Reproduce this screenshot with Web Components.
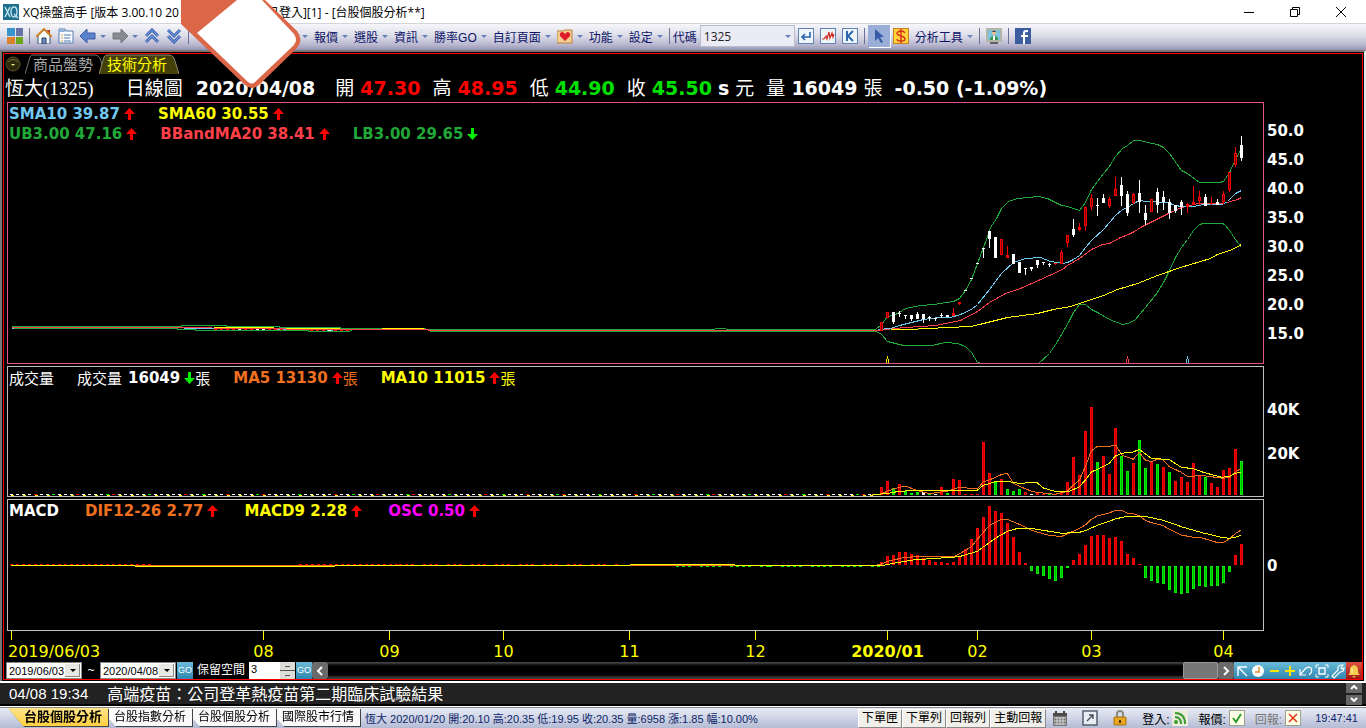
<!DOCTYPE html>
<html lang="zh-Hant">
<head>
<meta charset="utf-8">
<title>XQ操盤高手</title>
<style>
html, body { margin: 0; background: #fff; }
body { font: 12px "Liberation Sans", "Noto Sans CJK TC", sans-serif; color: #000; }
</style>
</head>
<body>
<xq-app></xq-app>

<script>
const ICONS = {
  logo: '<rect width="16" height="16" fill="#1f6f8f"/><path d="M2 3l5 10M7 3L2 13" stroke="#bfe3ee" stroke-width="1.4"/><path d="M11 3q3 0 3 5t-3 5-3-5 3-5zM11 10l4 4" fill="none" stroke="#bfe3ee" stroke-width="1.4"/>',
  tiles: '<path d="M0 0h8v8H0z" fill="#3a94cc"/><path d="M9 0h7v8H9z" fill="#6574a4"/><path d="M0 9h8v7H0z" fill="#d9822b"/><path d="M9 9h7v7H9z" fill="#6aa51e"/>',
  home: '<path d="M11 2h3v5l-3-3z" fill="#b04020"/><path d="M2 8l6-6 6 6v8H2z" fill="#f8f8f4" stroke="#33507c"/><path d="M0 9l8-8 8 8" fill="none" stroke="#d08a30" stroke-width="2"/><path d="M6 10h4v6H6z" fill="#6d86c0" stroke="#26406c"/>',
  doc: '<path d="M1 1h6l1 2h7v12H1z" fill="#f8fbff" stroke="#557cae"/><path d="M1 2h6v2H1z" fill="#8cb0dc"/><path d="M3 7h2M3 10h2M3 13h2" stroke="#d49a30"/><path d="M6 7h7M6 10h6M6 13h7" stroke="#4a7ab8"/>',
  back: '<path d="M0 8l7-7v4h8v6H7v4z" fill="#5b82cc" stroke="#3c5da6"/>',
  forward: '<path d="M16 8L9 1v4H1v6h8v4z" fill="#888c90" stroke="#74787c"/>',
  up: '<path d="M2 8l6-6 6 6M2 14l6-6 6 6" fill="none" stroke="#3e66b4" stroke-width="3"/><path d="M2 8l6-6 6 6M2 14l6-6 6 6" fill="none" stroke="#7ea2e0"/>',
  down: '<path d="M2 2l6 6 6-6M2 8l6 6 6-6" fill="none" stroke="#3e66b4" stroke-width="3"/><path d="M2 2l6 6 6-6M2 8l6 6 6-6" fill="none" stroke="#7ea2e0"/>',
  heart: '<path d="M0 3h6l2-1h7v13H0z" fill="#f3cf94" stroke="#c0803c"/><path d="M8 13L3 8q-1-4 3-4l2 2 2-2q4 0 3 4z" fill="#dc1c28"/>',
  enter: '<rect x=".5" y=".5" width="15" height="15" fill="#eef6fc" stroke="#5e82b4"/><path d="M12 4v5H4M7 6L4 9l3 3" fill="none" stroke="#2862b0" stroke-width="1.6"/>',
  trend: '<rect x=".5" y=".5" width="15" height="15" fill="#eef6fc" stroke="#5e82b4"/><path d="M2 11h2l2-3 1 3 2-7 1 6 2-5 1 4 1-3" fill="none" stroke="#d02820" stroke-width="1.2"/>',
  kline: '<rect x=".5" y=".5" width="15" height="15" fill="#eef6fc" stroke="#5e82b4"/><path d="M5 3v10M11 3L6 8l5 5" fill="none" stroke="#2c68b0" stroke-width="2"/>',
  cursor: '<path d="M4 1l9 8H9l3 5-2 1-3-5-3 3z" fill="#365ca8"/>',
  dollar: '<rect x=".5" y=".5" width="15" height="15" fill="#ffd43a" stroke="#cc8020"/><path d="M12 5Q11 3 8 3T4 5q0 2 4 3t4 3q0 2-4 2t-4-2M8 1v14" fill="none" stroke="#d83018" stroke-width="1.4"/>',
  agent: '<path d="M1 1h14v12H1z" fill="#7cc4dc" stroke="#b4b4a8" stroke-width="2"/><path d="M4 12q0-4 4-4t4 4z" fill="#3a9048"/><path d="M7 8h2v4H7z" fill="#fff"/><circle cx="8" cy="5" r="2" fill="#eac090"/><path d="M6 4q2-3 4 0z" fill="#503020"/><path d="M4 15h8" stroke="#606060" stroke-width="2"/>',
  facebook: '<rect width="16" height="16" fill="#3d5c9f"/><path d="M8 16V9H6V7h2V5q0-3 3-3h2v2h-1q-2 0-2 1v2h3v2h-3v7z" fill="#fff"/>',
  orb: '<circle cx="8" cy="8" r="7" fill="#2c2a0c" stroke="#57532a"/><path d="M3 6q5-5 10 0" stroke="#777340" fill="none"/><path d="M6 8h4l-2 2z" fill="#e8e480"/>',
  left: '<path d="M10 4L6 8l4 4" fill="none" stroke="#fff" stroke-width="2"/>',
  right: '<path d="M6 4l4 4-4 4" fill="none" stroke="#fff" stroke-width="2"/>',
  nw: '<path d="M4 13V4h9M4 4l9 9" fill="none" stroke="#fff" stroke-width="1.4"/>',
  clock: '<circle cx="8" cy="8" r="6" fill="#fff"/><path d="M9 4v5H5" fill="none" stroke="#e09030" stroke-width="1.5"/>',
  minus: '<path d="M4 8h9" stroke="#ffe600" stroke-width="2"/>',
  plus: '<path d="M3 8h10M8 3v10" stroke="#ffe600" stroke-width="2"/>',
  undo: '<path d="M2 6v6h6M2 12l5-6q3-3 6-1 2 4-2 7" fill="none" stroke="#fff" stroke-width="1.2"/>',
  fit: '<path d="M2 5V2h3M11 2h3v3M14 11v3h-3M5 14H2v-3" fill="none" stroke="#fff"/><path d="M5 5h6v6H5z" fill="none" stroke="#fff" stroke-width="1.4"/>',
  wrench: '<path d="M2 13l6-6q-1-4 3-5l2 0-2 3 1 1 2-1q0 4-4 4l-6 6z" fill="none" stroke="#fff" stroke-width="1.2"/>',
  bell: '<path d="M2 12q2-1 2-5t4-5q4 1 4 5t2 5z" fill="#f4cc50"/><path d="M6 13h4l-2 2z" fill="#e8b038"/><path d="M6 5v5" stroke="#fff3b8"/>',
  calendar: '<path d="M1 3h14v13H1z" fill="#777"/><path d="M1 3h14v3H1z" fill="#4c4c4c"/><path d="M2 8h12M2 11h12M2 14h12M5 7v8M8 7v8M11 7v8" stroke="#d4d4d4"/><path d="M4 1v3M12 1v3" stroke="#444" stroke-width="2"/>',
  open: '<rect x="1" y="1" width="14" height="14" fill="#e8ecf4" stroke="#54606c" stroke-width="1.5"/><path d="M5 11l6-6M7 5h4v4" fill="none" stroke="#45505c" stroke-width="1.4"/>',
  lock: '<path d="M5 8V4q0-3 3-3t3 3v4" fill="none" stroke="#8a8a80" stroke-width="2"/><rect x="2" y="7" width="12" height="8" rx="1" fill="#eaa61e" stroke="#a87010"/><path d="M8 10v3" stroke="#553000" stroke-width="2"/>',
  feed: '<rect width="16" height="16" fill="#ecebdc"/><circle cx="4" cy="12" r="2" fill="#3c9c30"/><path d="M3 7q6 0 6 7M3 3q10 0 10 11" fill="none" stroke="#3c9c30" stroke-width="2"/>',
  ok: '<rect x=".5" y=".5" width="15" height="15" fill="#ffffe8" stroke="#a0a090"/><path d="M4 8l3 4 5-8" fill="none" stroke="#2c9a2c" stroke-width="2"/>',
  no: '<rect x=".5" y=".5" width="15" height="15" fill="#ffffe8" stroke="#a0a090"/><path d="M4 4l8 8M12 4l-8 8" fill="none" stroke="#e03818" stroke-width="1.6"/>',
  min: '<path d="M3 8.5h10" stroke="#000"/>',
  restore: '<path d="M3.500 5.500h7v7h-7zM5.500 5V3.500h7v7H11" fill="none" stroke="#000"/>',
  close: '<path d="M3 3l10 10M13 3L3 13" stroke="#000"/>'
};

function define(name, html) {
  const template = document.createElement('template');
  template.innerHTML = html;
  customElements.define(name, class extends HTMLElement {
    constructor() {
      super();
      this.attachShadow({ mode: 'open' }).appendChild(template.content.cloneNode(true));
    }
  });
}

class XqIcon extends HTMLElement {
  constructor() {
    super();
    this.attachShadow({ mode: 'open' });
  }

  connectedCallback() {
    this.shadowRoot.innerHTML = `
      <style>:host { display: block; flex: none; width: 16px; height: 16px; } svg { display: block; }</style>
      <svg width="16" height="16" viewBox="0 0 16 16" aria-hidden="true">${ICONS[this.getAttribute('name')] || ''}</svg>`;
  }
}
customElements.define('xq-icon', XqIcon);

define('xq-titlebar', `
<style>
:host { display: flex; align-items: center; height: 23px; padding: 0 2px 0 3px; background: #fff;
  font: 12px "Open Sans", "Noto Sans CJK TC", sans-serif; white-space: nowrap; }
.name { margin-left: 4px; }
.state { margin-left: 88px; flex: 1; }
button { display: flex; justify-content: center; align-items: center; width: 46px; height: 22px; padding: 0; border: 0; background: none; }
</style>
<xq-icon name="logo"></xq-icon>
<span class="name">XQ操盤高手 [版本 3.00.10 20</span>
<span class="state">已登入][1] - [台股個股分析**]</span>
<button aria-label="最小化"><xq-icon name="min"></xq-icon></button>
<button aria-label="還原"><xq-icon name="restore"></xq-icon></button>
<button aria-label="關閉"><xq-icon name="close"></xq-icon></button>
`);

define('tool-button', `
<style>
:host { display: block; flex: none; }
button { display: flex; align-items: center; height: 22px; padding: 0 3px; border: 0; background: none; font: inherit; color: #0c1468; }
:host([active]) button { background: #9aaed8; box-shadow: 1px 1px #fff; }
i { border: 3px solid transparent; border-top-color: #6482b8; border-bottom: 0; margin-left: 4px; }
:host(:not([menu])) i { display: none; }
</style>
<button><slot></slot><i></i></button>
`);

define('xq-toolbar', `
<style>
:host { display: flex; align-items: center; height: 24px; padding: 0 4px 2px; border-top: 1px solid #d4d4dc;
  background: linear-gradient(#f6f6fa, #dddde9 45%, #b9b7cf 80%, #9794b2); }
hr { width: 1px; height: 16px; margin: 0 3px; border: 0; background: #6c7096; }
.gap { width: 103px; }
label { margin: 0 3px 0 0; color: #0c1468; }
.code { display: grid; width: 95px; }
.code > * { grid-area: 1 / 1; }
select { appearance: none; height: 22px; padding: 0 3px; border: 1px solid #b8bccc; border-radius: 0; background: #eaebf4; font: 12px "Open Sans", sans-serif; color: #222; }
.code i { place-self: center end; margin-right: 4px; border: 3px solid transparent; border-top-color: #6482b8; border-bottom: 0; pointer-events: none; }
</style>
<tool-button><xq-icon name="tiles"></xq-icon></tool-button>
<hr>
<tool-button><xq-icon name="home"></xq-icon></tool-button>
<tool-button><xq-icon name="doc"></xq-icon></tool-button>
<tool-button menu><xq-icon name="back"></xq-icon></tool-button>
<tool-button menu><xq-icon name="forward"></xq-icon></tool-button>
<tool-button><xq-icon name="up"></xq-icon></tool-button>
<tool-button><xq-icon name="down"></xq-icon></tool-button>
<hr>
<span class="gap"></span>
<tool-button menu></tool-button>
<tool-button menu>報價</tool-button>
<tool-button menu>選股</tool-button>
<tool-button menu>資訊</tool-button>
<tool-button menu>勝率GO</tool-button>
<tool-button menu>自訂頁面</tool-button>
<tool-button menu><xq-icon name="heart"></xq-icon></tool-button>
<tool-button menu>功能</tool-button>
<tool-button menu>設定</tool-button>
<hr>
<label for="code">代碼</label>
<span class="code"><select id="code"><option>1325</option></select><i></i></span>
<tool-button><xq-icon name="enter"></xq-icon></tool-button>
<tool-button><xq-icon name="trend"></xq-icon></tool-button>
<tool-button><xq-icon name="kline"></xq-icon></tool-button>
<hr>
<tool-button active><xq-icon name="cursor"></xq-icon></tool-button>
<tool-button><xq-icon name="dollar"></xq-icon></tool-button>
<tool-button menu>分析工具</tool-button>
<hr>
<tool-button><xq-icon name="agent"></xq-icon></tool-button>
<hr>
<tool-button><xq-icon name="facebook"></xq-icon></tool-button>
`);

define('xq-badge', `
<style>
:host { display: block; position: absolute; top: 0; left: 181px; pointer-events: none; }
svg { display: block; }
</style>
<svg width="121" height="90" viewBox="0 0 121 90" aria-hidden="true">
  <path d="M0 0H84L116 31Q123 40 116 48L78 85Q71 91 64 85L0 24z" fill="#dc6648"/>
  <path d="M56 0H81L113 34Q117 40 113 45L74 82Q71 85 67 82L16 33z" fill="#fff"/>
</svg>
`);

define('page-tab', `
<style>
:host { display: grid; color: #a8a8a8; }
:host([selected]) { color: #ff0; margin-left: -6px; }
svg, button { grid-area: 1 / 1; }
svg { width: 100%; height: 20px; }
path { fill: #000; stroke: #707070; vector-effect: non-scaling-stroke; }
:host([selected]) path { fill: #453f08; stroke: #8a8a70; }
button { height: 20px; padding: 0 11px 0 7px; border: 0; background: none; font: 15px/20px "Noto Sans CJK TC", sans-serif; color: inherit; white-space: nowrap; }
</style>
<svg viewBox="0 0 80 20" preserveAspectRatio="none" aria-hidden="true"><path d="M0 20L5 3Q6 1 8 1H70Q73 1 75 4L80 20"/></svg>
<button><slot></slot></button>
`);

define('xq-quote', `
<style>
:host { display: flex; align-items: center; gap: 12px; height: 28px; padding-left: 1px; color: #fff; white-space: nowrap;
  font: 19px/27px "DejaVu Sans", "Noto Sans CJK TC", sans-serif; }
.name { font-family: "Liberation Serif", "Noto Sans CJK TC", serif; margin-right: 20px; }
.date { margin: 0 8px 0 1px; }
.up { color: #f00; }
.down { color: #00e000; }
</style>
<span class="name">恆大(1325)</span>
<span>日線圖</span>
<b class="date">2020/04/08</b>
<span>開 <b class="up">47.30</b></span>
<span>高 <b class="up">48.95</b></span>
<span>低 <b class="down">44.90</b></span>
<span>收 <b class="down">45.50</b> <b>s</b> 元</span>
<span>量 <b>16049</b> 張</span>
<b>-0.50 (-1.09%)</b>
`);

// indicator name and value, with the direction of its last move
class IndicatorValue extends HTMLElement {
  constructor() {
    super();
    this.attachShadow({ mode: 'open' });
  }

  connectedCallback() {
    const move = this.getAttribute('move');
    const arrow = move === 'down'
      ? '<path d="M4 0h3v6h4l-5.500 6L0 6h4z" fill="#00f000"/>'
      : '<path d="M4 12h3V6h4L5.500 0 0 6h4z" fill="#f00"/>';
    this.shadowRoot.innerHTML = `
      <style>
      :host { display: flex; align-items: center; font: bold 15px/20px "DejaVu Sans", sans-serif; white-space: nowrap; }
      svg { margin-left: 4px; }
      ::slotted(span) { font: 15px/20px "Noto Sans CJK TC", sans-serif; }
      </style>
      <slot name="label"></slot><slot></slot>
      ${move ? `<svg width="11" height="12" aria-hidden="true">${arrow}</svg>` : ''}
      <slot name="unit"></slot>`;
  }
}
customElements.define('indicator-value', IndicatorValue);

const FIRST_X = 881;
const STEP = 6;
const PINK = '#e8508c';
const COLORS = { R: '#ff0000', G: '#00f000', W: '#ffffff' };

// kind, high, body top, body bottom, low
const CANDLES = `R 322 322 330 330,R 312 312 317 317,W 312 312 321 323,W 311 313 313 316,W 315 315 315 318,W 315 315 318 320,
W 312 314 318 318,W 314 314 318 322,W 316 317 317 320,W 318 318 318 320,W 313 315 315 317,W 315 315 316 316,R 308 313 315 315,
R 302 302 303 304,W 290 290 290 290,W 278 278 278 278,W 263 263 263 263,W 248 248 248 257,W 231 231 238 247,W 237 237 257 257,
R 239 239 254 254,R 246 255 257 257,W 254 254 263 263,W 262 262 272 272,W 268 268 268 274,W 267 267 268 270,W 260 260 264 267,
W 262 262 262 264,W 263 264 264 266,R 263 263 263 264,R 250 252 263 263,R 235 235 242 246,W 219 229 234 236,R 223 227 229 230,
R 207 207 225 230,R 194 198 206 209,W 198 205 205 215,W 194 198 202 202,R 197 199 205 207,R 177 189 195 195,W 177 185 195 205,
W 191 194 212 215,R 193 194 202 203,W 180 193 201 212,W 205 213 219 224,R 199 199 211 211,W 188 192 204 212,W 191 197 201 209,
W 199 202 212 218,W 205 205 210 212,W 200 202 206 214,R 203 204 206 212,R 186 202 204 204,R 191 197 200 204,W 194 197 205 205,
R 197 203 203 204,W 199 202 204 204,R 191 194 201 203,R 172 172 189 191,R 147 153 164 166,W 136 145 157 160`;

const VOLUME = [8, 14, 7, 11, 4, 2, 3, 3, 1, 1, 8, 2, 16, 15, 1, 1, 1, 53, 22, 13, 16, 6, 4, 6, 3, 1, 2, 1, 1, 1, 4, 13, 38, 20, 64, 88, 33, 39, 21, 67, 39, 24, 32, 55, 27, 34, 31, 28, 23, 14, 18, 13, 32, 20, 18, 12, 8, 25, 27, 46, 34];
const VOLUME_KIND = 'RRGRGGGWGWRGRRRRRRRGRGGGRWRRGRRRRRRRGRRRGGRGGRGRGRRRRRGRRRRRG';
const OSC = [3, 9, 10, 13, 13, 11, 10, 7, 5, 3, 3, 2, 3, 9, 16, 26, 37, 48, 59, 54, 52, 42, 28, 13, 2, -5, -8, -10, -13, -15, -12, -2, 5, 11, 20, 29, 30, 30, 27, 28, 24, 11, 7, 1, -12, -15, -17, -18, -24, -27, -28, -27, -23, -20, -21, -20, -20, -17, -6, 10, 21];

function line(color, points, extra = '') {
  return `<polyline points="${points}" fill="none" stroke="${color}" ${extra}/>`;
}

function bar(x, top, bottom, kind) {
  const color = COLORS[kind];
  const inner = { R: '#c80000', G: '#00b800', W: '#ffffff' }[kind];
  let out = `<rect x="${x - 1}" y="${top}" width="3" height="${Math.max(1, bottom - top)}" fill="${color}"/>`;
  if (bottom - top > 2) {
    out += `<rect x="${x}" y="${top + 1}" width="1" height="${bottom - top - 2}" fill="${inner}"/>`;
  }
  return out;
}

// row of flat marks for the days with almost no trades
function dashes(from, to, y, kinds) {
  let out = '';
  for (let x = from, i = 0; x < to; x += STEP, i++) {
    const kind = kinds[i % kinds.length];
    if (COLORS[kind]) {
      out += `<rect x="${x - 1}" y="${y}" width="3" height="1" fill="${COLORS[kind]}"/>`;
    }
  }
  return out;
}

function marker(x, color) {
  return line(color, `${x - 1},363 ${x - 1},359 ${x},358 ${x},355 ${x},358 ${x + 1},359 ${x + 1},363`);
}

function drawPrice() {
  let out = '<g transform="translate(.5 .5)">';
  out += line('#20a838', '11,326 180,326 182,325 225,325 227,326 278,326 280,327 339,327 341,328 423,328 427,329 710,329 720,328 730,329 875,329 881,324 887,316 893,315 899,312 905,308 920,305 933,304 953,301 959,298 965,290 971,279 977,263 983,247 989,231 990,227 996,218 1001,208 1008,201 1017,198 1038,196 1047,198 1061,205 1067,206 1079,210 1085,202 1091,189 1103,173 1109,166 1115,156 1122,148 1127,145 1133,140 1140,140 1147,142 1157,144 1163,147 1169,153 1181,170 1187,173 1199,182 1219,182 1223,181 1229,172 1235,159 1241,148');
  out += line('#20a838', '11,328 176,328 178,329 194,329 196,330 306,330 310,331 349,331 352,329 428,329 430,331 876,331 881,334 887,341 899,344 903,345 931,345 945,342 957,343 965,346 971,352 977,362 981,363');
  out += line('#20a838', '1038,363 1049,353 1057,341 1068,322 1073,312 1079,304 1085,304 1091,309 1097,312 1109,319 1122,324 1127,323 1134,320 1140,313 1149,302 1157,292 1163,282 1169,270 1175,257 1181,247 1187,239 1193,230 1199,224 1203,223 1222,223 1224,224 1229,230 1235,239 1241,247');
  out += line('#ff4048', '11,327 210,327 213,328 284,328 286,329 427,329 429,330 878,330 884,329 905,327 935,325 960,320 977,311 989,302 1005,293 1020,288 1049,275 1062,269 1067,265 1079,258 1091,249 1102,244 1109,243 1120,237 1128,234 1134,231 1140,227 1170,212 1181,207 1198,203 1223,203 1230,201 1237,199 1241,197');
  out += line('#ffff00', '213,327 273,327') + line('#ffff00', '285,328 339,328') + line('#ffff00', '381,328 423,328');
  out += line('#ffff00', '890,329 908,329 947,327 971,326 1007,317 1037,313 1053,309 1070,306 1103,295 1117,289 1137,283 1157,275 1180,267 1210,258 1217,254 1232,249 1241,244');
  out += line('#70c8f0', '11,328 13,328') + line('#70c8f0', '183,328 213,328') + line('#70c8f0', '273,329 285,329') + line('#70c8f0', '326,330 332,330');
  out += line('#70c8f0', '878,329 890,328 899,325 911,322 923,319 938,317 950,317 960,314 971,309 977,304 989,289 1001,273 1013,262 1025,258 1040,257 1050,261 1062,263 1067,262 1073,259 1079,255 1085,247 1091,240 1103,229 1109,222 1115,215 1122,209 1127,207 1133,203 1139,200 1145,201 1167,202 1175,205 1181,206 1193,206 1203,204 1222,204 1227,201 1235,193 1241,190');
  out += marker(887, '#ffff00') + marker(1127, '#ff4048') + marker(1187, '#70c8f0') + '</g>';
  out += dashes(215, 284, 329, 'RRRRWRRWWR') + dashes(311, 350, 330, 'RRRWRR');
  CANDLES.split(',').forEach((row, i) => {
    const [kind, ...ys] = row.trim().split(' ');
    const [high, top, bottom, low] = ys.map(Number);
    const x = FIRST_X + i * STEP;
    const color = COLORS[kind];
    out += `<path d="M${x} ${high}h1V${top}h-1zM${x} ${bottom}h1V${low + 1}h-1z" fill="${color}"/>`;
    out += `<rect x="${x - 1}" y="${top}" width="3" height="${bottom - top + 1}" fill="${color}"/>`;
    if (kind === 'R' && bottom - top > 2) {
      out += `<rect x="${x}" y="${top + 1}" width="1" height="${bottom - top - 1}" fill="#700"/>`;
    }
  });
  return out;
}

function drawVolume() {
  let out = dashes(11, 881, 494, 'WWWWRWWGWWWRWWWWGRWWWWWGW');
  out += VOLUME.map((v, i) => bar(FIRST_X + i * STEP, 495 - v, 495, VOLUME_KIND[i])).join('');
  const keep = 'vector-effect="non-scaling-stroke"';
  out += line('#ffff00', '11,495.500 873,495.500', 'stroke-dasharray="3 9"');
  out += '<g transform="translate(870 370) scale(.3333)">';
  out += line('#f07020', '0,376 30,372 52,364 70,357 88,352 106,348 140,361 178,371 214,366 232,364 268,352 322,357 340,335 358,330 394,314 412,310 430,339 448,349 485,364 500,367 555,373 592,364 610,345 628,331 646,290 664,243 682,229 718,229 738,226 755,255 790,268 808,247 826,270 844,275 862,268 880,270 898,290 934,307 952,319 1000,317 1060,325 1078,322 1096,307 1112,295', keep);
  out += line('#ffff00', '0,376 60,369 88,364 140,361 322,361 340,346 376,335 412,334 448,340 500,337 520,354 555,364 592,366 628,351 646,330 664,306 682,298 718,280 736,258 755,250 790,246 808,238 844,265 898,269 934,292 970,296 1000,307 1055,322 1078,319 1096,310 1112,307', keep);
  return out + '</g>';
}

function drawMacd() {
  let out = dashes(11, 150, 564, 'RRRRRRRRRRRRR') + dashes(137, 300, 566, 'GGGG-GGGGG-GG');
  out += dashes(300, 400, 564, 'R') + dashes(400, 620, 564, 'RRR-') + dashes(677, 770, 566, 'GGG-G') + dashes(770, 881, 566, 'G-GGG');
  out += OSC.map((v, i) => {
    const x = FIRST_X + i * STEP;
    return v > 0 ? bar(x, 565 - v, 565, 'R') : bar(x, 566, 566 - v, 'G');
  }).join('');
  out += line('#f07020', '11,565.500 875,565.500');
  out += line('#ffff00', '11,565.500 130,565.500 140,566.500 330,566.500 340,565.500 620,565.500 640,564.500 720,564.500 750,565.500 875,565.500');
  const keep = 'vector-effect="non-scaling-stroke"';
  out += '<g transform="translate(870 500) scale(.3333)">';
  out += line('#f07020', '0,197 30,194 52,184 100,173 150,169 250,170 268,162 304,140 322,118 358,76 394,58 412,58 448,73 485,91 540,107 575,109 592,102 628,85 646,75 664,58 682,48 718,39 738,30 755,31 772,39 790,41 808,47 826,61 844,68 880,77 898,88 934,105 970,112 990,112 1040,127 1060,127 1078,117 1096,101 1112,91', keep);
  out += line('#ffff00', '0,197 40,196 70,190 136,179 200,175 268,170 322,154 376,115 412,94 440,86 490,86 575,100 628,97 646,92 682,76 736,57 770,49 826,49 880,61 940,82 1000,99 1055,112 1078,115 1096,112 1112,106', keep);
  return out + '</g>';
}

const PLOTS = {
  price: { top: 103, height: 260, gap: 23, border: PINK, draw: drawPrice },
  volume: { top: 367, height: 129, gap: 23, border: '#c0c0c0', draw: drawVolume },
  macd: { top: 500, height: 130, gap: 26, border: '#c0c0c0', draw: drawMacd }
};

class ChartPanel extends HTMLElement {
  constructor() {
    super();
    this.attachShadow({ mode: 'open' });
  }

  connectedCallback() {
    const plot = PLOTS[this.getAttribute('plot')];
    this.shadowRoot.innerHTML = `
      <style>
      :host { display: grid; border: 1px solid ${plot.border}; }
      svg, .legend { grid-area: 1 / 1; }
      svg { display: block; width: 100%; height: ${plot.height}px; shape-rendering: crispEdges; }
      .legend { padding: 1px 0 0 1px; }
      ::slotted(div) { display: flex; gap: ${plot.gap}px; }
      </style>
      <svg viewBox="8 ${plot.top} 1255 ${plot.height}" preserveAspectRatio="none" aria-hidden="true">${plot.draw()}</svg>
      <div class="legend"><slot></slot></div>`;
  }
}
customElements.define('chart-panel', ChartPanel);

define('value-scale', `
<style>
:host { display: flex; flex-direction: column; padding-left: 3px; color: #fff; font: bold 15px "DejaVu Sans", sans-serif; }
</style>
<slot></slot>
`);

define('time-axis', `
<style>
:host { display: grid; height: 31px; padding-left: 4px; color: #ff0; font: 16px/24px "DejaVu Sans", sans-serif;
  grid-template-columns: 252fr 126fr 114fr 126fr 126fr 132fr 90fr 114fr 132fr 41fr; }
div { display: flex; flex-direction: column; align-items: center; width: 1px; }
div::before { content: ""; flex: none; width: 1px; height: 9px; background: #ff0; }
.first span { align-self: flex-start; margin-left: -3px; }
</style>
<div class="first"><span>2019/06/03</span></div>
<div>08</div><div>09</div><div>10</div><div>11</div><div>12</div>
<div><b>2020/01</b></div>
<div>02</div><div>03</div><div>04</div>
`);

define('chart-controls', `
<style>
:host { display: flex; align-items: stretch; height: 17px; padding-left: 2px; color: #fff; }
.combo { display: grid; width: 76px; }
.combo > * { grid-area: 1 / 1; }
select { appearance: none; height: 17px; padding: 0 2px; border: 1px solid #888; border-radius: 0; background: #fff; color: #000; font: 11px "Liberation Sans", sans-serif; }
.combo i { place-self: center end; width: 15px; height: 13px; margin-right: 2px; background: #e8e8e4; box-shadow: inset -1px -1px #888; display: grid; place-items: center; pointer-events: none; }
.combo i::before { content: ""; border: 3px solid transparent; border-top-color: #000; border-bottom: 0; }
.to { width: 18px; text-align: center; line-height: 17px; }
button { flex: none; width: 16px; height: 17px; padding: 0; border: 0; background: linear-gradient(#6cbcd8, #2e86b0); font: 9px/17px "Liberation Sans", sans-serif; color: #fff; text-align: center; }
.go { margin-left: 1px; }
label { margin: 0 4px; line-height: 17px; white-space: nowrap; }
input { width: 31px; box-sizing: border-box; height: 17px; padding: 0 2px 4px; border: 0; background: #fff; font: 11px/12px "Liberation Sans", sans-serif; appearance: textfield; }
input::-webkit-inner-spin-button { display: none; }
.spin { display: flex; flex-direction: column; width: 15px; gap: 1px; background: #555; }
.spin button { width: 15px; height: 8px; background: #dcdcd8; display: grid; place-items: center; }
.spin button::before { content: ""; width: 5px; height: 1px; background: #555; }
.scroll { flex: 1; display: flex; justify-content: flex-end; background: linear-gradient(#444 1px, #222 2px, #000 4px, #000 13px, #222 14px, #444); }
.thumb { width: 33px; border: 1px solid #999; background: #777; border-radius: 2px; }
.nav { background: #6a6a6a; border-radius: 2px; }
.bell { background: linear-gradient(#e05040, #a01818); }
</style>
<span class="combo"><select aria-label="起始日期"><option>2019/06/03</option></select><i></i></span>
<span class="to">~</span>
<span class="combo"><select aria-label="結束日期"><option>2020/04/08</option></select><i></i></span>
<button class="go">GO</button>
<label for="space">保留空間</label>
<input id="space" type="number" value="3">
<span class="spin"><button aria-label="增加"></button><button aria-label="減少"></button></span>
<button class="go">GO</button>
<button class="nav" aria-label="向左"><xq-icon name="left"></xq-icon></button>
<div class="scroll"><div class="thumb"></div></div>
<button class="nav" aria-label="向右"><xq-icon name="right"></xq-icon></button>
<button aria-label="左上"><xq-icon name="nw"></xq-icon></button>
<button aria-label="時間"><xq-icon name="clock"></xq-icon></button>
<button aria-label="縮小"><xq-icon name="minus"></xq-icon></button>
<button aria-label="放大"><xq-icon name="plus"></xq-icon></button>
<button aria-label="復原"><xq-icon name="undo"></xq-icon></button>
<button aria-label="全圖"><xq-icon name="fit"></xq-icon></button>
<button aria-label="設定"><xq-icon name="wrench"></xq-icon></button>
<button class="bell" aria-label="警示"><xq-icon name="bell"></xq-icon></button>
`);

define('xq-workspace', `
<style>
:host { display: block; padding: 1px; background: #000; border: 2px solid #777; border-right-color: #e8e8ec; border-bottom: 0; }
.frame { border: 1px solid #f00; }
.tabs { display: flex; align-items: center; height: 20px; padding-left: 1px; }
.tabs page-tab:first-of-type { margin-left: 4px; }
.orb { padding: 0; border: 0; background: none; }
.charts { display: grid; grid-template-columns: minmax(0, 1fr) 98px; row-gap: 2px; padding-left: 3px; }
.prices { padding-top: 15px; line-height: 29px; }
.volumes { padding-top: 22px; line-height: 44px; }
.zero { justify-content: center; padding-top: 2px; }
time-axis { margin-top: -2px; }
.sky { color: #70c8f0; } .yellow { color: #ff0; } .green { color: #20a838; } .red { color: #ff4048; }
.orange { color: #f07020; } .white { color: #fff; } .magenta { color: #f0f; }
.label { margin-right: 6px; }
</style>
<div class="frame">
  <div class="tabs">
    <button class="orb" aria-label="選單"><xq-icon name="orb"></xq-icon></button>
    <page-tab>商品盤勢</page-tab>
    <page-tab selected>技術分析</page-tab>
  </div>
  <xq-quote></xq-quote>
  <div class="charts">
    <chart-panel plot="price">
      <div>
        <indicator-value class="sky" move="up">SMA10 39.87</indicator-value>
        <indicator-value class="yellow" move="up">SMA60 30.55</indicator-value>
      </div>
      <div>
        <indicator-value class="green" move="up">UB3.00 47.16</indicator-value>
        <indicator-value class="red" move="up">BBandMA20 38.41</indicator-value>
        <indicator-value class="green" move="down">LB3.00 29.65</indicator-value>
      </div>
    </chart-panel>
    <value-scale class="prices"><span>50.0</span><span>45.0</span><span>40.0</span><span>35.0</span><span>30.0</span><span>25.0</span><span>20.0</span><span>15.0</span></value-scale>
    <chart-panel plot="volume">
      <div>
        <indicator-value class="white"><span slot="label">成交量</span></indicator-value>
        <indicator-value class="white" move="down"><span slot="label" class="label">成交量</span>16049<span slot="unit">張</span></indicator-value>
        <indicator-value class="orange" move="up">MA5 13130<span slot="unit">張</span></indicator-value>
        <indicator-value class="yellow" move="up">MA10 11015<span slot="unit">張</span></indicator-value>
      </div>
    </chart-panel>
    <value-scale class="volumes"><span>40K</span><span>20K</span></value-scale>
    <chart-panel plot="macd">
      <div>
        <indicator-value class="white">MACD</indicator-value>
        <indicator-value class="orange" move="up">DIF12-26 2.77</indicator-value>
        <indicator-value class="yellow" move="up">MACD9 2.28</indicator-value>
        <indicator-value class="magenta" move="up">OSC 0.50</indicator-value>
      </div>
    </chart-panel>
    <value-scale class="zero"><span>0</span></value-scale>
    <time-axis></time-axis>
  </div>
  <chart-controls></chart-controls>
</div>
`);

define('news-ticker', `
<style>
:host { display: flex; align-items: center; gap: 19px; height: 21px; padding: 0 4px 2px 9px; border: solid #fff; border-width: 2px 0 1px; box-shadow: inset 0 -2px #000;
  background: #222; color: #fff; font: 16px/21px "Noto Sans CJK TC", sans-serif; white-space: nowrap; }
time { font: 15px "Liberation Sans", sans-serif; }
a { flex: 1; color: inherit; text-decoration: none; }
div { display: flex; flex-direction: column; gap: 2px; }
button { display: grid; place-items: center; width: 16px; height: 10px; padding: 0; border: 0; background: #666; }
</style>
<time>04/08 19:34</time>
<a href="#news">高端疫苗：公司登革熱疫苗第二期臨床試驗結果</a>
<div>
  <button aria-label="上一則"><svg width="8" height="5"><path d="M1 4l3-3 3 3" fill="none" stroke="#fff" stroke-width="2"/></svg></button>
  <button aria-label="下一則"><svg width="8" height="5"><path d="M1 1l3 3 3-3" fill="none" stroke="#fff" stroke-width="2"/></svg></button>
</div>
`);

define('sheet-tab', `
<style>
:host { display: block; filter: drop-shadow(1px 1px #444); }
a { display: block; height: 18px; padding: 0 6px 0 5px; background: #fafafa; color: #000; line-height: 18px; text-decoration: none; white-space: nowrap;
  clip-path: polygon(0 0, 100% 0, 100% 100%, 6px 100%, 0 11px); }
:host([selected]) a { padding-left: 16px; background: linear-gradient(#ffe48a, #ffd040); font-weight: bold; font-size: 13px;
  clip-path: polygon(0 0, 100% 0, 100% 100%, 15px 100%); }
</style>
<a href="#sheet"><slot></slot></a>
`);

define('status-bar', `
<style>
:host { display: flex; align-items: center; height: 20px; padding: 0 8px; border-top: 1px solid #888; overflow: hidden; white-space: nowrap;
  background: linear-gradient(#e8ebf4, #cfd5e6 50%, #b4bcd4); }
nav { display: flex; align-self: flex-start; gap: 1px; }
.last { display: flex; align-items: baseline; gap: 3px; margin-left: 5px; flex: 1; color: #0c2468; font-size: 11px; }
.orders { display: flex; margin-right: 6px; }
.orders button { height: 19px; padding: 0 3px; border: 1px solid; border-color: #fff #888 #888 #fff; background: #f0efea; font: inherit; line-height: 16px; }
.tools { display: flex; gap: 14px; margin-right: 14px; }
.state { display: flex; align-items: center; gap: 3px; margin-right: 10px; }
.off { color: #777; }
time { margin-left: 4px; color: #0c2468; font-size: 11px; }
</style>
<nav>
  <sheet-tab selected>台股個股分析</sheet-tab>
  <sheet-tab>台股指數分析</sheet-tab>
  <sheet-tab>台股個股分析</sheet-tab>
  <sheet-tab>國際股市行情</sheet-tab>
</nav>
<div class="last"><span>恆大</span> <span>2020/01/20</span> <span>開:20.10</span> <span>高:20.35</span> <span>低:19.95</span> <span>收:20.35</span> <span>量:6958</span> <span>漲:1.85</span> <span>幅:10.00%</span></div>
<div class="orders"><button>下單匣</button><button>下單列</button><button>回報列</button><button>主動回報</button></div>
<div class="tools"><xq-icon name="calendar"></xq-icon><xq-icon name="open"></xq-icon><xq-icon name="lock"></xq-icon></div>
<span class="state">登入:<xq-icon name="feed"></xq-icon></span>
<span class="state">報價:<xq-icon name="ok"></xq-icon></span>
<span class="state off">回報:<xq-icon name="no"></xq-icon></span>
<time>19:47:41</time>
`);

define('xq-app', `
<style>
:host { display: block; position: relative; }
</style>
<xq-titlebar></xq-titlebar>
<xq-toolbar></xq-toolbar>
<xq-workspace></xq-workspace>
<news-ticker></news-ticker>
<status-bar></status-bar>
<xq-badge></xq-badge>
`);
</script>
</body>
</html>
